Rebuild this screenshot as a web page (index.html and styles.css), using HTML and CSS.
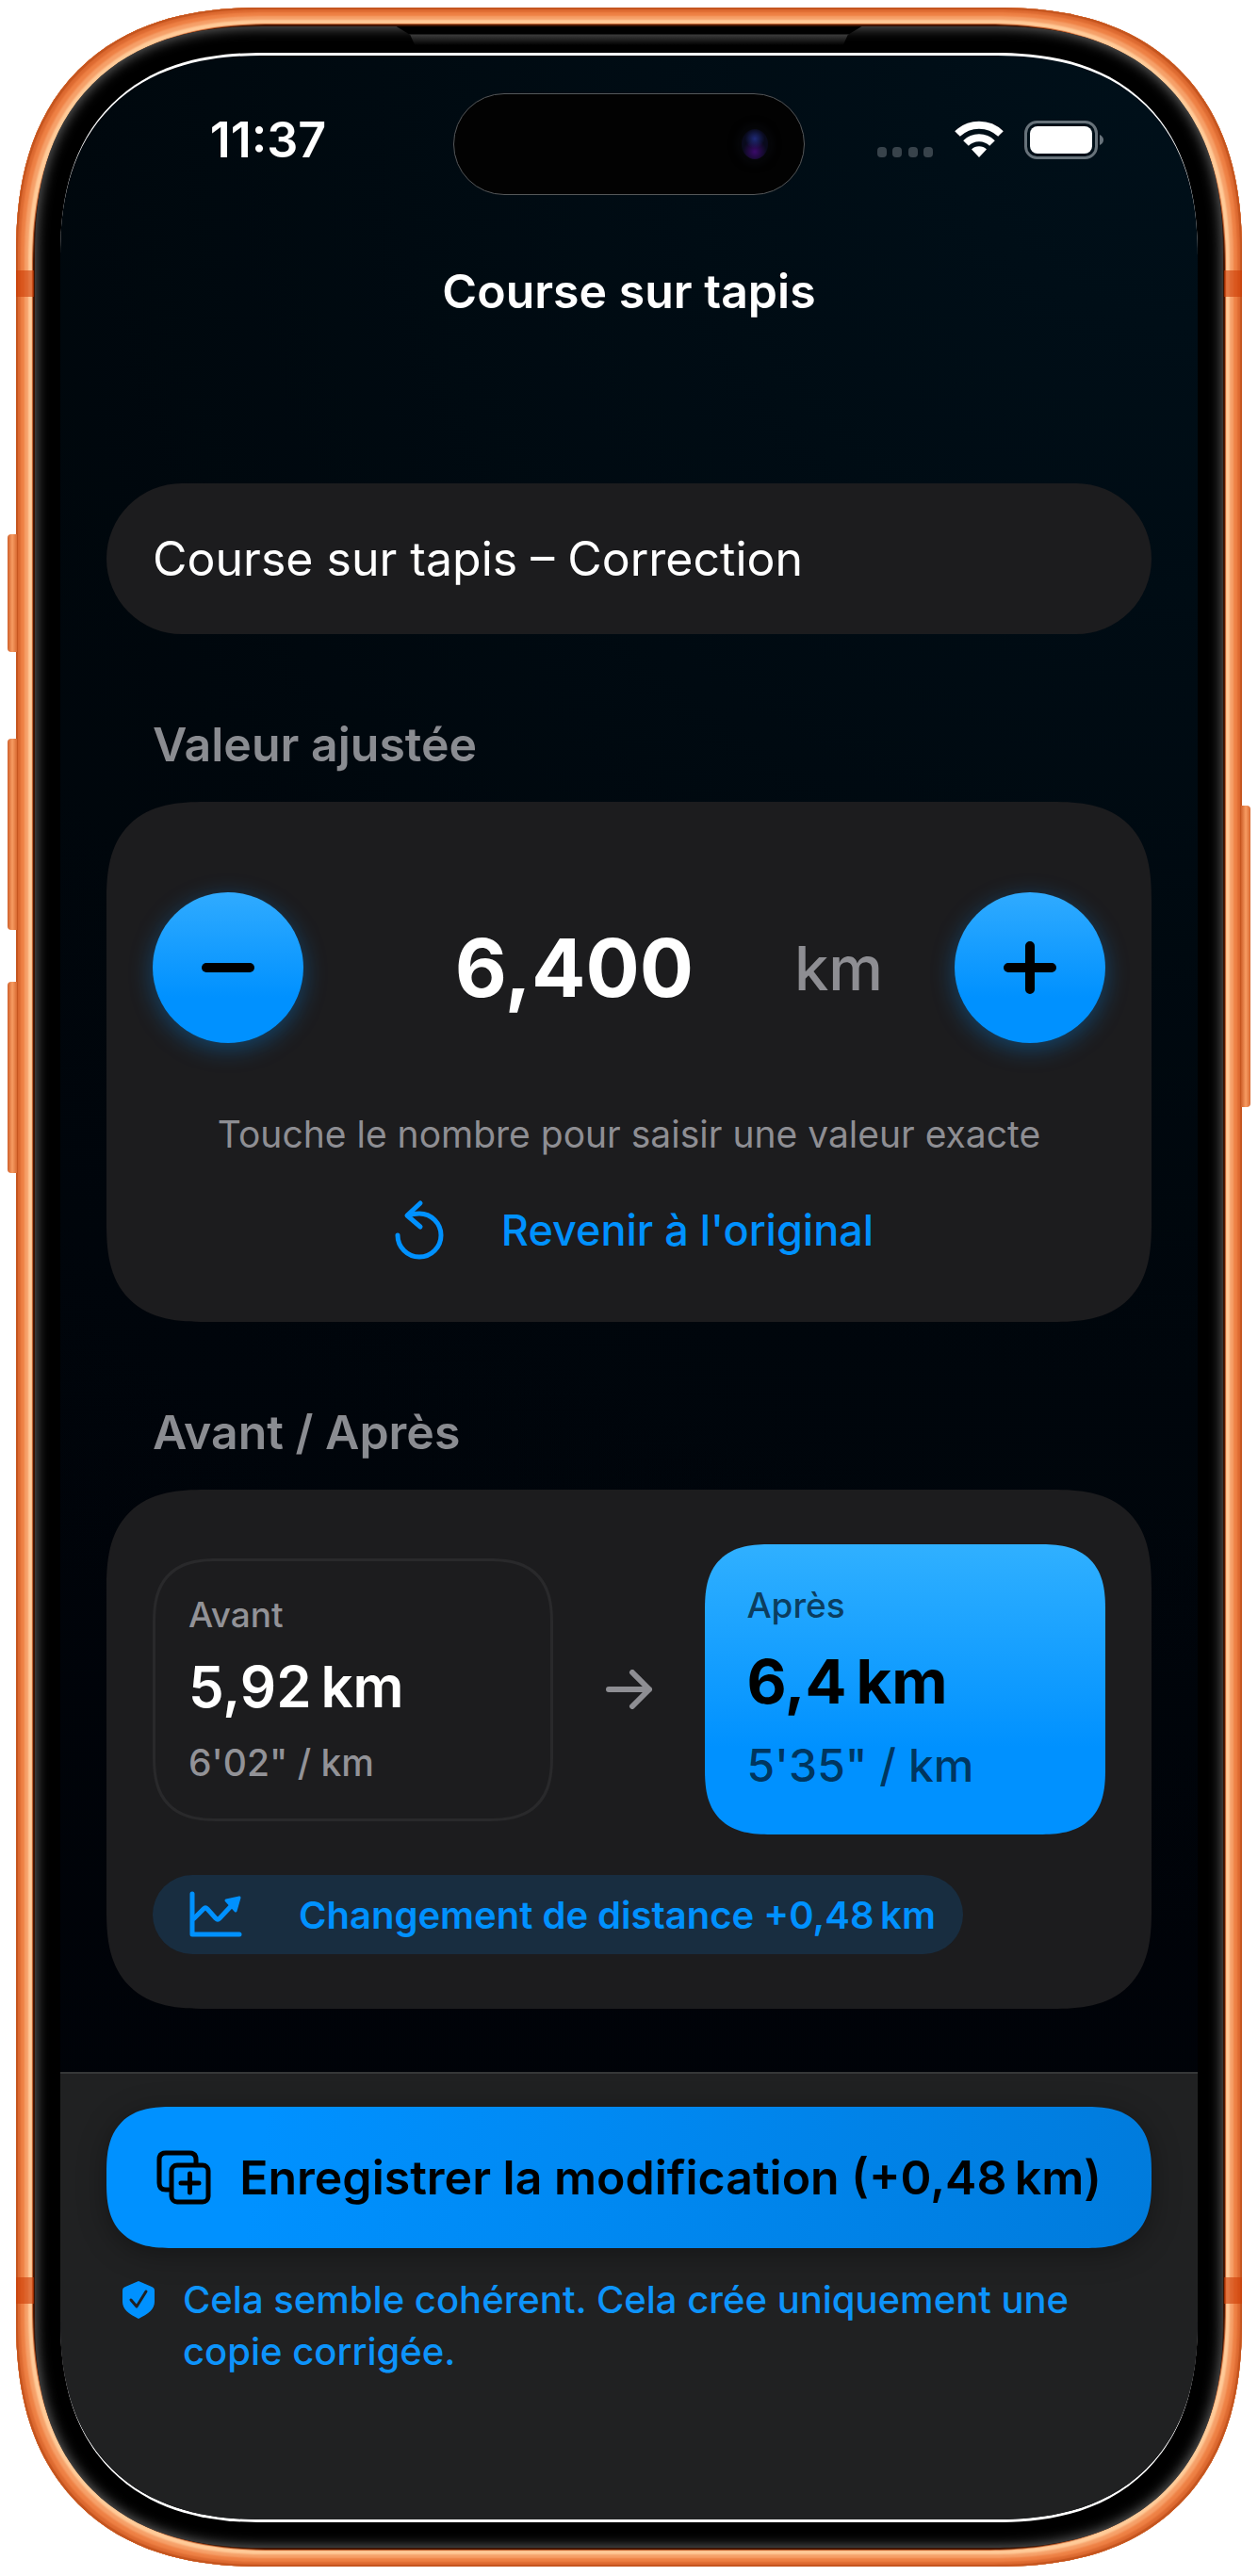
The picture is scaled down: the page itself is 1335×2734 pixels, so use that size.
FILE: index.html
```html
<!DOCTYPE html>
<html lang="fr">
<head>
    <meta charset="UTF-8">
    <meta name="viewport" content="width=device-width, initial-scale=1.0">
    <title>Course sur tapis</title>
    <link rel="stylesheet" href="styles.css">
</head>
<body>

    <div class="phone">
        <span class="side-button action"></span>
        <span class="side-button volume-up"></span>
        <span class="side-button volume-down"></span>
        <span class="side-button power"></span>
        <span class="antenna top-left"></span>
        <span class="antenna top-right"></span>
        <span class="antenna bottom-left"></span>
        <span class="antenna bottom-right"></span>

        <div class="bezel">
            <span class="earpiece"></span>

            <div class="screen">
                <div class="status-bar">
                    <span class="time">11:37</span>
                    <div class="island"><span class="camera"></span></div>
                    <div class="status-icons">
                        <svg width="60" height="40" viewBox="0 0 60 40" fill="#38434b">
                            <rect x="0" y="28" width="10" height="11" rx="4"/>
                            <rect x="16" y="28" width="10" height="11" rx="4"/>
                            <rect x="33" y="28" width="10" height="11" rx="4"/>
                            <rect x="49" y="28" width="10" height="11" rx="4"/>
                        </svg>
                        <svg width="52" height="40" viewBox="0 0 52 40" fill="none" stroke="#fff" stroke-width="8">
                            <path d="M3 14A33 33 0 0 1 49 14"/>
                            <path d="M12 24A20 20 0 0 1 40 24"/>
                            <path d="M26 39l-8-8.500a11.500 11.500 0 0 1 16 0z" fill="#fff" stroke="none"/>
                        </svg>
                        <svg width="85" height="42" viewBox="0 0 85 42">
                            <rect x="1.500" y="1.500" width="75" height="38" rx="12" fill="none" stroke="#67727a" stroke-width="3"/>
                            <rect x="6" y="6" width="66" height="29" rx="8" fill="#fff"/>
                            <path d="M80 15q4 2 4 5.500t-4 5.500z" fill="#67727a"/>
                        </svg>
                    </div>
                </div>

                <h1>Course sur tapis</h1>

                <form class="content" onsubmit="return false">
                    <input class="name-field" type="text" aria-label="Nom" value="Course sur tapis – Correction">

                    <h2>Valeur ajustée</h2>
                    <section class="card adjust">
                        <div class="stepper">
                            <button type="button" class="step" aria-label="Diminuer">
                                <svg width="58" height="58" viewBox="0 0 58 58" stroke="#000" stroke-width="10" stroke-linecap="round"><path d="M6 29h46"/></svg>
                            </button>
                            <div class="readout">
                                <input id="distance" type="text" inputmode="decimal" value="6,400">
                                <label for="distance">km</label>
                            </div>
                            <button type="button" class="step" aria-label="Augmenter">
                                <svg width="58" height="58" viewBox="0 0 58 58" stroke="#000" stroke-width="10" stroke-linecap="round"><path d="M6 29h46M29 6v46"/></svg>
                            </button>
                        </div>
                        <p class="hint">Touche le nombre pour saisir une valeur exacte</p>
                        <button type="button" class="reset">
                            <svg width="54" height="64" viewBox="0 0 54 64" fill="none" stroke="currentColor" stroke-width="5" stroke-linecap="round" stroke-linejoin="round">
                                <path d="M4 38a23 23 0 1 0 23-23q-7 0-11 2"/>
                                <path d="M28 4L14 17l14 12"/>
                            </svg>
                            Revenir à l'original
                        </button>
                    </section>

                    <h2>Avant / Après</h2>
                    <section class="card">
                        <div class="compare">
                            <div class="box before">
                                <span class="label">Avant</span>
                                <strong>5,92&#8201;km</strong>
                                <span class="pace">6'02" / km</span>
                            </div>
                            <svg class="arrow" width="50" height="42" viewBox="0 0 50 42" fill="none" stroke="#8e8e93" stroke-width="6" stroke-linecap="round" stroke-linejoin="round">
                                <path d="M3 21h43M28 3l18 18-18 18"/>
                            </svg>
                            <div class="box after">
                                <span class="label">Après</span>
                                <strong>6,4&#8201;km</strong>
                                <span class="pace">5'35" / km</span>
                            </div>
                        </div>
                        <div class="change">
                            <svg width="56" height="50" viewBox="0 0 56 50" fill="none" stroke="currentColor" stroke-width="5" stroke-linecap="round" stroke-linejoin="round">
                                <path d="M3 3v43h50"/>
                                <path d="M5 29l10-10q2-2 4 0l9 10q2 2 4 0l15-16"/>
                                <path d="M39 10l14-3-4 14z" fill="currentColor" stroke-width="3"/>
                            </svg>
                            Changement de distance +0,48&#8201;km
                        </div>
                    </section>
                </form>

                <footer class="save-bar">
                    <button type="button" class="save">
                        <svg width="58" height="58" viewBox="0 0 58 58" fill="none" stroke="#000" stroke-width="5" stroke-linecap="round" stroke-linejoin="round">
                            <path d="M13 42h-3q-7 0-7-7V10q0-7 7-7h25q7 0 7 7v4"/>
                            <rect x="16" y="16" width="39" height="39" rx="6"/>
                            <path d="M26 35h19M35.500 25v20"/>
                        </svg>
                        <span>Enregistrer la modification (+0,48&#8201;km)</span>
                    </button>
                    <p class="note">
                        <svg width="34" height="40" viewBox="0 0 34 40">
                            <path d="M17 0l14 6q3 1 3 4v12c0 8-7 13-17 18C7 35 0 30 0 22V10q0-3 3-4z" fill="#0091ff"/>
                            <path d="M9 20l6 7 10-16" fill="none" stroke="#202122" stroke-width="3" stroke-linecap="round" stroke-linejoin="round"/>
                        </svg>
                        Cela semble cohérent. Cela crée uniquement une copie corrigée.
                    </p>
                </footer>
            </div>
        </div>
    </div>

</body>
</html>
```
FILE: styles.css
```css
* {
    box-sizing: border-box;
}

body {
    margin: 0;
    padding: 8px 17px;
    background-color: #fff;
    color: #fff;
    font-family: Inter, 'Liberation Sans', sans-serif;
}

h1, h2, p {
    margin: 0;
}

button, input {
    font-family: inherit;
    border: none;
    padding: 0;
}

button {
    cursor: pointer;
}

svg {
    flex-shrink: 0;
}

/* Device frame */
.phone {
    position: relative;
    padding: 20px;
    border-radius: 230px;
    background-color: #3a1200;
    box-shadow:
        inset 0 0 1px 2px #c4551f,
        inset 0 0 2px 5px #dd6a31,
        inset 0 0 2px 9px #ee8145,
        inset 0 0 2px 13px #f6a069,
        inset 0 0 1px 17px #ffcb99,
        inset 0 0 1px 18px #c9602c;
}

.side-button {
    position: absolute;
    left: -9px;
    width: 10px;
    border-radius: 4px 0 0 4px;
    background: linear-gradient(to right, #d0602a, #f79c62 50%, #d96a32);
}

.action {
    top: 559px;
    height: 125px;
}

.volume-up {
    top: 776px;
    height: 203px;
}

.volume-down {
    top: 1034px;
    height: 203px;
}

.power {
    top: 847px;
    left: auto;
    right: -9px;
    height: 320px;
    border-radius: 0 4px 4px 0;
}

.antenna {
    position: absolute;
    width: 19px;
    height: 28px;
    background-color: rgba(205, 60, 5, 0.6);
}

.top-left {
    top: 279px;
    left: 0;
}

.top-right {
    top: 279px;
    right: 0;
}

.bottom-left {
    bottom: 279px;
    left: 0;
}

.bottom-right {
    bottom: 279px;
    right: 0;
}

.bezel {
    position: relative;
    padding: 28px 27px 27px;
    border-radius: 210px;
    background-color: #000;
    box-shadow: inset 0 0 14px 1px #6a6a6a;
}

.earpiece {
    position: absolute;
    top: 0;
    left: 50%;
    width: 494px;
    height: 20px;
    margin-left: -247px;
    background: linear-gradient(#000 8px, #3a3a3a 9px, #000 20px);
    clip-path: polygon(0 0, 100% 0, 97% 9px, 96% 100%, 4% 100%, 3% 9px);
}

.screen {
    position: relative;
    border-top: 3px solid #fff;
    border-bottom: 3px solid #fff;
    border-radius: 184px;
    overflow: hidden;
    background: radial-gradient(circle at 100% 0, #00101a, rgba(0, 8, 14, 0.6) 45%, transparent 70%), linear-gradient(#00060a, #00040a 50%, #000207);
}

/* Status bar */
.status-bar {
    display: grid;
    grid-template-columns: 1fr auto 1fr;
    align-items: center;
    padding-top: 40px;
}

.time {
    padding: 0 0 8px 24px;
    text-align: center;
    font-size: 52px;
    font-weight: 600;
    line-height: 60px;
}

.island {
    display: flex;
    justify-content: flex-end;
    align-items: center;
    width: 373px;
    height: 108px;
    padding-right: 38px;
    border: 1px solid #55585a;
    border-radius: 54px;
    background-color: #020202;
}

.camera {
    width: 28px;
    height: 32px;
    border-radius: 50%;
    background: radial-gradient(circle at 50% 32%, #1f2a78, transparent 40%), radial-gradient(circle at 50% 75%, #3a0a6a, transparent 45%), #090a1c;
    box-shadow: 0 0 10px 4px #07080c;
}

.status-icons {
    display: flex;
    justify-content: center;
    gap: 22px;
    padding: 0 22px 8px 0;
}

h1 {
    margin-top: 72px;
    text-align: center;
    font-size: 50px;
    font-weight: 600;
    line-height: 60px;
}

/* Form */
.content {
    padding: 174px 49px 67px;
}

.name-field {
    display: block;
    width: 100%;
    height: 160px;
    padding: 0 49px;
    border-radius: 80px;
    background-color: #1c1c1e;
    color: #fff;
    font-size: 50px;
}

h2 {
    margin: 87px 49px 31px;
    color: #8a8c91;
    font-size: 50px;
    font-weight: 600;
    line-height: 60px;
}

.card {
    padding: 58px 49px;
    border-radius: 80px;
    background-color: #1c1c1e;
}

.adjust {
    padding: 96px 49px 68px;
    text-align: center;
}

.stepper {
    display: flex;
    align-items: center;
}

.step {
    display: grid;
    place-items: center;
    flex-shrink: 0;
    width: 160px;
    height: 160px;
    border-radius: 50%;
    background: linear-gradient(#30abff, #0091ff 70%);
    box-shadow: 0 6px 24px rgba(0, 145, 255, 0.35);
}

.readout {
    display: flex;
    flex: 1;
    align-items: center;
    min-width: 0;
    padding: 0 76px 0 54px;
}

.readout input {
    flex: 1;
    min-width: 0;
    background: none;
    color: #fff;
    text-align: center;
    font-size: 85px;
    font-weight: 700;
}

.readout label {
    color: #8e8e93;
    font-size: 65px;
    font-weight: 500;
}

.hint {
    margin-top: 72px;
    color: #8e8e93;
    font-size: 39px;
    line-height: 50px;
}

.reset {
    display: flex;
    align-items: center;
    gap: 60px;
    height: 60px;
    margin: 46px auto 0;
    padding-left: 10px;
    background: none;
    color: #0091ff;
    font-size: 45px;
    font-weight: 500;
}

.compare {
    display: flex;
    justify-content: space-between;
    align-items: center;
}

.box {
    display: flex;
    flex-direction: column;
    width: 42%;
    border-radius: 54px;
    white-space: nowrap;
}

.before {
    padding: 29px 35px 26px;
    border: 3px solid #29292b;
    color: #929297;
}

.after {
    padding: 37px 44px;
    background: linear-gradient(#30b0ff, #0091ff 70%);
    color: rgba(0, 0, 0, 0.65);
}

.label {
    font-size: 37px;
    font-weight: 500;
    line-height: 56px;
}

.before strong {
    color: #fff;
    font-size: 60px;
    font-weight: 600;
    line-height: 96px;
}

.before .pace {
    font-size: 39px;
    font-weight: 500;
    line-height: 66px;
}

.after strong {
    color: #000;
    font-size: 65px;
    font-weight: 700;
    line-height: 106px;
}

.after .pace {
    font-size: 48px;
    font-weight: 500;
    line-height: 72px;
}

.change {
    display: flex;
    align-items: center;
    gap: 60px;
    width: fit-content;
    height: 84px;
    margin-top: 43px;
    padding: 0 29px 0 39px;
    border-radius: 42px;
    background-color: #182d40;
    color: #0091ff;
    font-size: 40px;
    font-weight: 600;
    white-space: nowrap;
}

/* Bottom bar */
.save-bar {
    padding: 35px 49px 151px;
    border-top: 2px solid #353738;
    background-color: #202122;
}

.save {
    display: flex;
    justify-content: center;
    align-items: center;
    gap: 30px;
    width: 100%;
    height: 150px;
    border-radius: 56px;
    background: linear-gradient(100deg, #0091ff 15%, #007bdc);
    box-shadow: 0 6px 30px rgba(0, 0, 0, 0.35);
    color: #000;
    font-size: 50px;
    font-weight: 600;
    white-space: nowrap;
}

.note {
    display: flex;
    gap: 30px;
    margin-top: 27px;
    padding: 0 17px;
    color: #0d94fb;
    font-size: 40px;
    font-weight: 500;
    line-height: 55px;
}

.note svg {
    margin-top: 8px;
}

/* Smoother corners where the browser can draw them */
@supports (corner-shape: superellipse(1.25)) {
    .phone {
        border-radius: 262px;
        corner-shape: superellipse(1.25);
    }

    .bezel {
        border-radius: 242px;
        corner-shape: superellipse(1.25);
    }

    .screen {
        border-radius: 216px;
        corner-shape: superellipse(1.25);
    }

    .card {
        border-radius: 105px;
        corner-shape: superellipse(1.4);
    }

    .box,
    .save {
        border-radius: 70px;
        corner-shape: superellipse(1.4);
    }
}
```
